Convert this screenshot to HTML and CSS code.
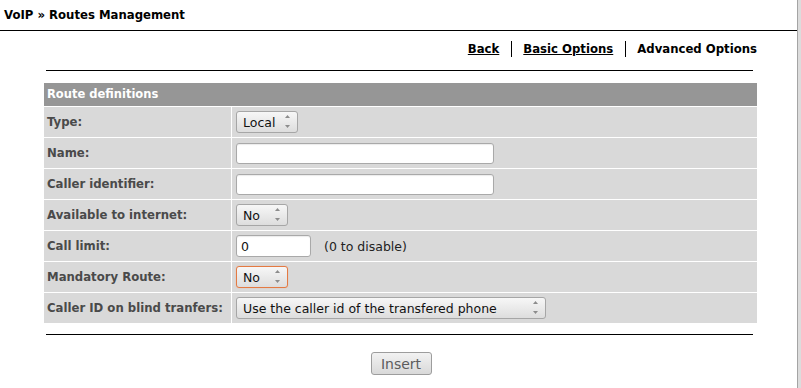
FILE: index.html
```html
<!DOCTYPE html>
<html>
<head>
<meta charset="utf-8">
<title>VoIP » Routes Management</title>
<link rel="stylesheet" href="styles.css">
</head>
<body>
<div class="window">
  <div class="main">
    <div class="title">VoIP » Routes Management</div>
    <div class="content">
      <nav class="nav">
        <a class="link" href="#">Back</a>
        <span class="sep"></span>
        <a class="link" href="#">Basic Options</a>
        <span class="sep"></span>
        <span class="current">Advanced Options</span>
      </nav>
      <div class="rule"></div>
      <div class="panel">
        <div class="panel-head">Route definitions</div>

        <div class="label">Type:</div>
        <div class="value">
          <span class="sel w-type"><select><option>Local</option></select><svg class="arrows" width="5" height="13" viewBox="0 0 5 13"><polygon points="0,3 2.5,0 5,3"/><polygon points="0,10 2.5,13 5,10"/></svg></span>
        </div>

        <div class="label">Name:</div>
        <div class="value"><input class="txt w-name" type="text" value=""></div>

        <div class="label">Caller identifier:</div>
        <div class="value"><input class="txt w-name" type="text" value=""></div>

        <div class="label">Available to internet:</div>
        <div class="value">
          <span class="sel w-short"><select><option>No</option></select><svg class="arrows" width="5" height="13" viewBox="0 0 5 13"><polygon points="0,3 2.5,0 5,3"/><polygon points="0,10 2.5,13 5,10"/></svg></span>
        </div>

        <div class="label">Call limit:</div>
        <div class="value"><input class="txt w-limit" type="text" value="0"><span class="hint">(0 to disable)</span></div>

        <div class="label">Mandatory Route:</div>
        <div class="value">
          <span class="sel w-short focus"><select><option>No</option></select><svg class="arrows" width="5" height="13" viewBox="0 0 5 13"><polygon points="0,3 2.5,0 5,3"/><polygon points="0,10 2.5,13 5,10"/></svg></span>
        </div>

        <div class="label">Caller ID on blind tranfers:</div>
        <div class="value">
          <span class="sel w-long"><select><option>Use the caller id of the transfered phone</option></select><svg class="arrows" width="5" height="13" viewBox="0 0 5 13"><polygon points="0,3 2.5,0 5,3"/><polygon points="0,10 2.5,13 5,10"/></svg></span>
        </div>
      </div>
      <div class="rule rule-bottom"></div>
      <div class="actions"><button class="btn" type="button">Insert</button></div>
    </div>
  </div>
  <div class="edge"></div>
</div>
</body>
</html>
```

FILE: styles.css
```css
html, body {
  margin: 0;
  padding: 0;
  background: #fff;
}
body {
  font-family: "DejaVu Sans", Verdana, sans-serif;
  color: #000;
}
.window {
  display: flex;
  width: 801px;
  height: 388px;
  overflow: hidden;
}
.main {
  width: 797px;
  flex: none;
}
.edge {
  flex: 1;
  border-left: 1px solid #a4a4a4;
  background: #dcdcdc;
}
.title {
  height: 14px;
  padding: 8px 0 8px 4px;
  line-height: 14px;
  font-size: 11.7px;
  font-weight: bold;
  border-bottom: 1px solid #000;
}
.content {
  margin-left: 44px;
  width: 713px;
}
.nav {
  display: flex;
  justify-content: flex-end;
  align-items: center;
  height: 16px;
  padding: 10px 0 13px;
  font-size: 11.7px;
  font-weight: bold;
  line-height: 16px;
}
.nav .link {
  color: #000;
  text-decoration: underline;
}
.nav .current {
  color: #000;
}
.nav .sep {
  width: 0;
  height: 16px;
  border-left: 1px solid #000;
  margin: 0 11px 0 12px;
}
.rule {
  height: 1px;
  background: #000;
  margin: 0 4px 0 2px;
}
.panel {
  display: grid;
  grid-template-columns: 187px 1fr;
  grid-template-rows: 23px repeat(7, 30px);
  gap: 1px;
  margin-top: 12px;
  background: #fff;
  font-size: 11.5px;
  font-weight: bold;
}
.panel-head {
  grid-column: 1 / -1;
  background: #969696;
  color: #fff;
  padding-left: 3px;
  line-height: 23px;
}
.label {
  background: #d9d9d9;
  color: #4a4a4a;
  padding-left: 3px;
  display: flex;
  align-items: center;
  font-size: 11.7px;
}
.value {
  background: #d9d9d9;
  padding-left: 4px;
  display: flex;
  align-items: center;
  font-weight: normal;
}
.sel {
  position: relative;
  display: inline-flex;
}
.sel select {
  -webkit-appearance: none;
  appearance: none;
  width: 100%;
  height: 22px;
  margin: 0;
  padding: 0 18px 0 6px;
  border: 1px solid #a6a6a6;
  border-radius: 3px;
  background: linear-gradient(#f7f7f7, #dddddd);
  font-family: "DejaVu Sans", sans-serif;
  font-size: 12.5px;
  color: #111;
  outline: none;
}
.sel.focus select {
  border-color: #e47a43;
  box-shadow: 0 0 1px 0 #f3a77c;
}
.sel .arrows {
  position: absolute;
  right: 8px;
  top: 4px;
  fill: #8c8c8c;
  pointer-events: none;
}
.w-type { width: 62px; }
.w-short { width: 52px; }
.w-long { width: 310px; }
.txt {
  height: 21px;
  box-sizing: border-box;
  margin: 0;
  padding: 0 4px;
  border: 1px solid #a9a9a9;
  border-radius: 3px;
  background: #fff;
  box-shadow: inset 0 1px 1px rgba(0, 0, 0, 0.08);
  font-family: "DejaVu Sans", sans-serif;
  font-size: 12.5px;
  color: #111;
}
.w-name { width: 258px; }
.w-limit { width: 75px; height: 22px; }
.hint {
  margin-left: 13px;
  font-size: 12.5px;
  color: #222;
}
.rule-bottom {
  margin-top: 11px;
}
.actions {
  display: flex;
  justify-content: center;
  margin-top: 17px;
  padding-left: 1px;
}
.btn {
  width: 61px;
  height: 23px;
  margin: 0;
  padding: 0;
  border: 1px solid #9d9d9d;
  border-radius: 3px;
  background: linear-gradient(#f2f2f2, #d9d9d9);
  font-family: "DejaVu Sans", sans-serif;
  font-size: 14px;
  color: #5c5c5c;
}
```
